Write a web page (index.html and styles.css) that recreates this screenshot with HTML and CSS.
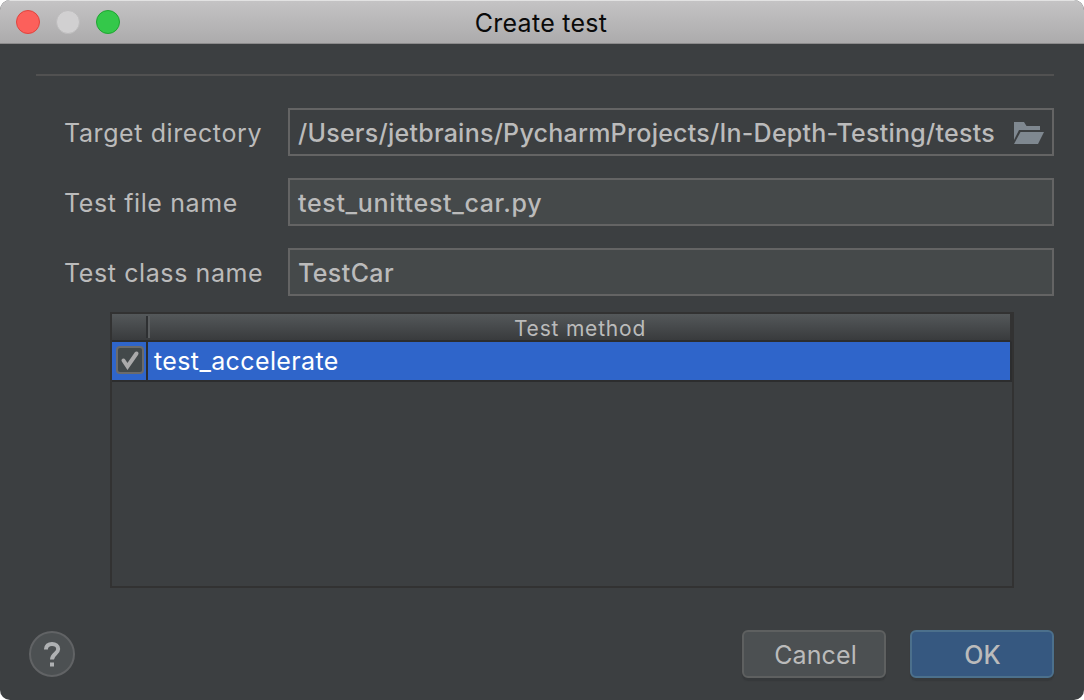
FILE: index.html
```html
<!DOCTYPE html>
<html lang="en">
<head>
<meta charset="utf-8">
<title>Create test</title>
<link rel="stylesheet" href="styles.css">
</head>
<body>
<div class="window">
  <header class="titlebar">
    <div class="lights"><span class="light close"></span><span class="light minimize"></span><span class="light zoom"></span></div>
    <h1 class="title">Create test</h1>
  </header>
  <main class="content">
    <div class="separator"></div>
    <div class="form">
      <label class="label">Target directory</label>
      <div class="field directory"><span class="v-dir">/Users/jetbrains/PycharmProjects/In-Depth-Testing/tests</span>
        <svg class="folder" width="30" height="22" viewBox="0 0 30 22"><path d="M0 0h10l2.5 4H26v4H5L0 18z"/><path d="M6.5 10H30l-6 12H0z"/></svg>
      </div>
      <label class="label">Test file name</label>
      <div class="field"><span class="v-file">test_unittest_car.py</span></div>
      <label class="label">Test class name</label>
      <div class="field"><span class="v-class">TestCar</span></div>
    </div>
    <div class="table">
      <div class="thead"><div class="th-check"></div><div class="th-name"><span>Test method</span></div></div>
      <div class="row">
        <div class="cell-check"><span class="checkbox"><svg width="24" height="24" viewBox="0 0 24 24"><path d="M5.5 12.5l4 6L18.5 5.5"/></svg></span></div>
        <div class="cell-name"><span>test_accelerate</span></div>
      </div>
    </div>
  </main>
  <footer class="footer">
    <button class="help" aria-label="Help"><svg width="18" height="26" viewBox="0 0 18 26"><path d="M2.9 8.6C2.9 4.9 5.6 2.9 9 2.9s6.2 1.9 6.2 5.1c0 4.7-6.2 4.9-6.2 10.6"/><path class="dot" d="M7 21.4h4v4H7z"/></svg></button>
    <button class="button cancel"><span>Cancel</span></button>
    <button class="button ok"><span>OK</span></button>
  </footer>
</div>
</body>
</html>
```
FILE: styles.css
```css
* { box-sizing: border-box; }
body { margin: 0; background: #fff; font-family: Inter, "Liberation Sans", sans-serif; font-size: 25px; color: #bbb; }
.window { width: 1084px; height: 700px; background: #3c3f41; border-radius: 10px; overflow: hidden; display: flex; flex-direction: column; }
.titlebar { flex: none; height: 44px; display: grid; grid-template-columns: 120px 1fr 120px; align-items: center; background: linear-gradient(#c4c3c4, #acabac); border-top: 1px solid #e2e2e2; border-bottom: 1px solid #8c8b8c; }
.lights { display: flex; gap: 16px; padding-left: 16px; }
.light { width: 24px; height: 24px; border-radius: 50%; border: 1px solid; }
.close { background: #fc605b; border-color: #e0443e; }
.minimize { background: #d1d0d1; border-color: #bdbcbd; }
.zoom { background: #34c84a; border-color: #1fa531; }
.title { margin: 0; text-align: center; font-size: 25px; line-height: 30px; font-weight: 400; color: #0a0a0a; letter-spacing: .27px; padding: 2px 2px 0 0; }
.content { flex: 1; padding: 30px 30px 0 36px; }
.separator { height: 2px; background: #515151; }
.form { display: grid; grid-template-columns: 224px 1fr; row-gap: 22px; padding: 32px 0 0 28px; }
.label { line-height: 50px; height: 48px; white-space: nowrap; letter-spacing: .6px; }
.field { height: 48px; border: 2px solid #646464; background: #45494a; padding: 0 8px; line-height: 46px; display: flex; align-items: center; justify-content: space-between; white-space: nowrap; font-weight: 500; }
.field span { padding-top: 2px; }
.v-dir { letter-spacing: .24px; }
.v-file { letter-spacing: .66px; }
.v-class { letter-spacing: .4px; }
.directory { background: #3c3f41; }
.folder { fill: #7f8890; flex: none; margin-top: 2px; }
.table { width: 904px; height: 276px; margin: 16px 0 0 74px; border: 2px solid #323232; }
.thead { width: 900px; height: 28px; display: flex; border-bottom: 2px solid #2c2d2e; border-right: 2px solid #323232; background: linear-gradient(#54585a, #393b3d); }
.th-check { width: 36px; height: 22px; margin-top: 2px; border-right: 2px solid #2e3032; }
.th-name { flex: 1; height: 22px; margin-top: 2px; border-left: 2px solid #5a5d5f; text-align: center; font-size: 21px; line-height: 25px; letter-spacing: .8px; }
.row { width: 900px; height: 40px; display: flex; background: #2f65ca; border-right: 2px solid #2c2d2e; border-bottom: 2px solid #2c2d2e; color: #fff; }
.cell-check { width: 36px; border-right: 2px solid #2c2d2e; padding: 4px; }
.checkbox { display: block; width: 28px; height: 28px; border: 2px solid #6b6b6b; border-radius: 4px; background: #43494a; }
.checkbox svg { display: block; fill: none; stroke: #aaa; stroke-width: 4; stroke-linecap: round; }
.cell-name { padding-left: 6px; line-height: 38px; letter-spacing: .38px; }
.footer { height: 70px; padding: 0 30px 0 29px; display: flex; align-items: flex-start; gap: 24px; }
.help { width: 46px; height: 46px; margin: 1px auto 0 0; padding: 0; border: 2px solid #616365; border-radius: 50%; background: #4c5052; display: flex; align-items: center; justify-content: center; }
.help svg { fill: none; stroke: #afb1b3; stroke-width: 4; }
.help .dot { fill: #afb1b3; stroke: none; }
.button { width: 144px; height: 48px; padding: 2px 0 0; border: 2px solid #5e6060; border-radius: 6px; background: #4c5052; color: #bbb; font: 400 25px Inter, "Liberation Sans", sans-serif; box-shadow: 0 3px 1px #36393b; }
.ok { background: #365880; border-color: #4c708c; font-weight: 500; padding-left: 1px; }
.cancel { letter-spacing: .1px; padding-left: 3px; }
```
